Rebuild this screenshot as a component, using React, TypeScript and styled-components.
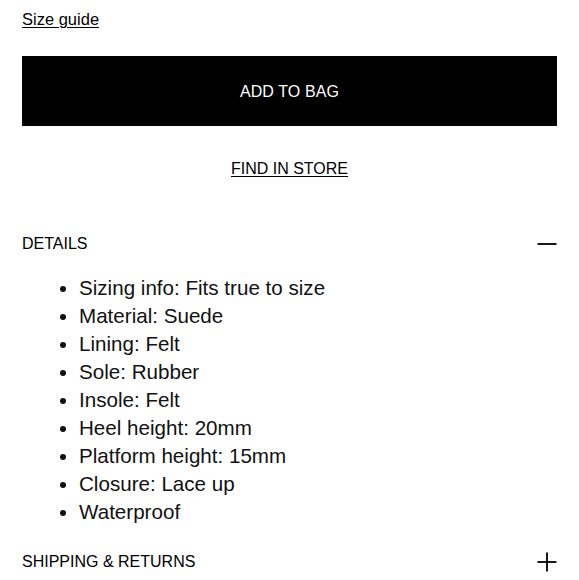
import React from "react";
import styled, { createGlobalStyle } from "styled-components";

const GlobalStyle = createGlobalStyle`
  body {
    margin: 0;
    background: #fff;
    color: #000;
    font-family: "Liberation Sans", Arial, sans-serif;
  }
`;

const details = [
  "Sizing info: Fits true to size",
  "Material: Suede",
  "Lining: Felt",
  "Sole: Rubber",
  "Insole: Felt",
  "Heel height: 20mm",
  "Platform height: 15mm",
  "Closure: Lace up",
  "Waterproof",
];

// Product purchase panel
export default function App() {
  return (
    <>
      <GlobalStyle />
      <Container>
        <SizeGuide href="#">Size guide</SizeGuide>
        <AddButton>ADD TO BAG</AddButton>
        <StoreRow>
          <StoreLink href="#">FIND IN STORE</StoreLink>
        </StoreRow>
        <Section>
          <SectionHeader>
            <SectionTitle>DETAILS</SectionTitle>
            <Toggle open />
          </SectionHeader>
          <DetailList>
            {details.map((d) => (
              <DetailItem key={d}>{d}</DetailItem>
            ))}
          </DetailList>
        </Section>
        <SectionHeader>
          <SectionTitle>SHIPPING &amp; RETURNS</SectionTitle>
          <Toggle />
        </SectionHeader>
      </Container>
    </>
  );
}

const Toggle = ({ open }: { open?: boolean }) => (
  <ToggleIcon width="20" height="20" viewBox="0 0 20 20">
    <path d="M0.5 10h19" stroke="#000" strokeWidth="1.8" />
    {!open && <path d="M10 0.5v19" stroke="#000" strokeWidth="1.8" />}
  </ToggleIcon>
);

// Styled Components
const Container = styled.div`
  width: 535px;
  padding: 9px 22px 0;
  display: flex;
  flex-direction: column;
`;

const SizeGuide = styled.a`
  align-self: flex-start;
  font-size: 16.5px;
  line-height: 20px;
  color: #000;
  text-decoration: underline;
  text-underline-offset: 2px;
`;

const AddButton = styled.button`
  margin-top: 27px;
  height: 70px;
  width: 100%;
  padding: 2px 0 0;
  background: #000;
  color: #fff;
  border: none;
  font-family: inherit;
  font-size: 16px;
  letter-spacing: 0.1px;
  cursor: pointer;
`;

const StoreRow = styled.div`
  display: flex;
  justify-content: center;
  margin-top: 33px;
`;

const StoreLink = styled.a`
  font-size: 16px;
  line-height: 20px;
  color: #000;
  text-decoration: underline;
  text-underline-offset: 2px;
`;

const Section = styled.div`
  margin-top: 55px;
`;

const SectionHeader = styled.div`
  display: flex;
  justify-content: space-between;
  align-items: center;
  height: 20px;
`;

const SectionTitle = styled.span`
  font-size: 16px;
`;

const ToggleIcon = styled.svg`
  display: block;
`;

const DetailList = styled.ul`
  margin: 20px 0 26px;
  padding-left: 57px;
  color: #111;
`;

const DetailItem = styled.li`
  font-size: 20.6px;
  line-height: 28px;
`;
